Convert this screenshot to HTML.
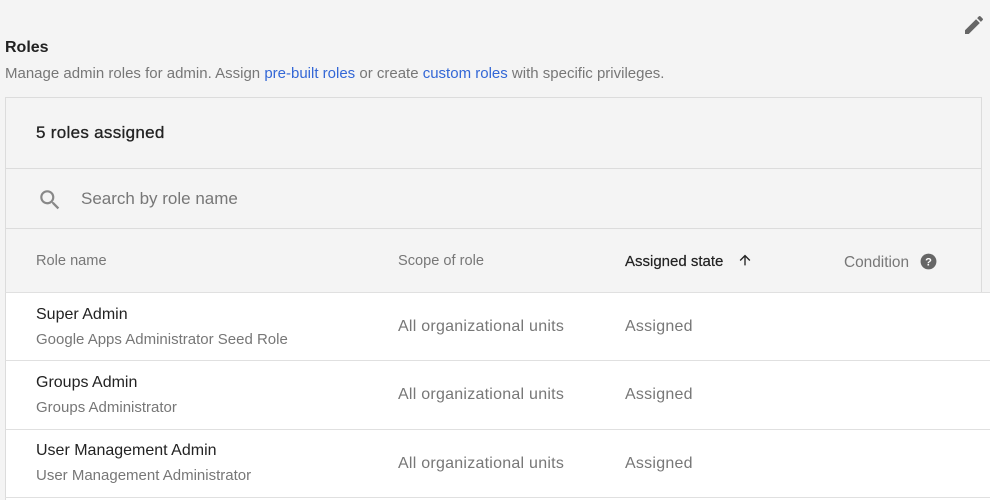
<!DOCTYPE html>
<html><head><style>
*{margin:0;padding:0;box-sizing:border-box}
body{width:990px;height:500px;background:#f4f4f4;font-family:"Liberation Sans",Arial,sans-serif;position:relative;overflow:hidden}
.a{position:absolute;white-space:nowrap}
.card{position:absolute;left:5px;top:97px;width:977px;height:196px;border:1px solid #dcdcdc;border-bottom:none}
.hl{position:absolute;left:5px;width:977px;height:1px;background:#dcdcdc}
.row{position:absolute;left:5px;width:985px;background:#fff;border-top:1px solid #e0e0e0;border-left:1px solid #dcdcdc}
.n{font-size:16px;color:#222}
.s{font-size:15px;color:#777}
.h{font-size:14.6px;color:#777}
.g{font-size:16px;letter-spacing:0.25px;color:#777}
</style></head><body>
<svg class="a" style="left:962px;top:13px" width="24" height="24" viewBox="0 0 24 24"><path fill="#666" d="M3 17.25V21h3.75L17.81 9.94l-3.75-3.75L3 17.25zM20.71 7.04a1 1 0 000-1.41l-2.34-2.34a1 1 0 00-1.41 0l-1.83 1.83 3.75 3.75 1.83-1.83z"/></svg>
<div class="a" style="left:5px;top:39px;font-size:16px;font-weight:bold;color:#222">Roles</div>
<div class="a" style="left:5px;top:65px;font-size:15px;color:#777">Manage admin roles for admin. Assign <span style="color:#3367d6">pre-built roles</span> or create <span style="color:#3367d6">custom roles</span> with specific privileges.</div>
<div class="card"></div>
<div class="hl" style="top:168px"></div>
<div class="hl" style="top:228px"></div>
<div class="a" style="left:36px;top:123px;font-size:17px;letter-spacing:0.3px;color:#222;-webkit-text-stroke:0.3px #222">5 roles assigned</div>
<svg class="a" style="left:37px;top:187px" width="26" height="26" viewBox="0 0 24 24"><path fill="#888" d="M15.5 14h-.79l-.28-.27A6.47 6.47 0 0016 9.5 6.5 6.5 0 109.5 16c1.61 0 3.09-.59 4.23-1.57l.27.28v.79l5 4.99L20.49 19l-4.99-5zm-6 0C7.01 14 5 11.99 5 9.5S7.01 5 9.5 5 14 7.01 14 9.5 11.99 14 9.5 14z"/></svg>
<div class="a" style="left:81px;top:189px;font-size:17px;color:#777">Search by role name</div>
<div class="a h" style="left:36px;top:253px">Role name</div>
<div class="a h" style="left:398px;top:253px">Scope of role</div>
<div class="a" style="left:625px;top:253px;font-size:15px;color:#222;-webkit-text-stroke:0.2px #222">Assigned state</div>
<svg class="a" style="left:737px;top:252px" width="16" height="16" viewBox="0 0 24 24"><path fill="#222" d="M4 12l1.41 1.41L11 7.83V20h2V7.83l5.58 5.59L20 12l-8-8-8 8z"/></svg>
<div class="a" style="left:844px;top:254px;font-size:15.4px;color:#777">Condition</div>
<svg class="a" style="left:919px;top:252px" width="19" height="19" viewBox="0 0 24 24"><circle cx="12" cy="12" r="10" fill="#666"/><text x="12" y="17" font-size="14" font-weight="bold" fill="#fff" text-anchor="middle" font-family="Liberation Sans">?</text></svg>
<div class="row" style="top:292px;height:68px"></div>
<div class="row" style="top:360px;height:69px"></div>
<div class="row" style="top:429px;height:71px"></div>
<div class="a n" style="left:36px;top:306px">Super Admin</div>
<div class="a s" style="left:36px;top:331px">Google Apps Administrator Seed Role</div>
<div class="a g" style="left:398px;top:318px">All organizational units</div>
<div class="a g" style="left:625px;top:318px">Assigned</div>
<div class="a n" style="left:36px;top:374px">Groups Admin</div>
<div class="a s" style="left:36px;top:399px">Groups Administrator</div>
<div class="a g" style="left:398px;top:386px">All organizational units</div>
<div class="a g" style="left:625px;top:386px">Assigned</div>
<div class="a n" style="left:36px;top:442px">User Management Admin</div>
<div class="a s" style="left:36px;top:467px">User Management Administrator</div>
<div class="a g" style="left:398px;top:455px">All organizational units</div>
<div class="a g" style="left:625px;top:455px">Assigned</div>
<div class="hl" style="top:497px;width:985px;background:#e0e0e0"></div>
</body></html>
